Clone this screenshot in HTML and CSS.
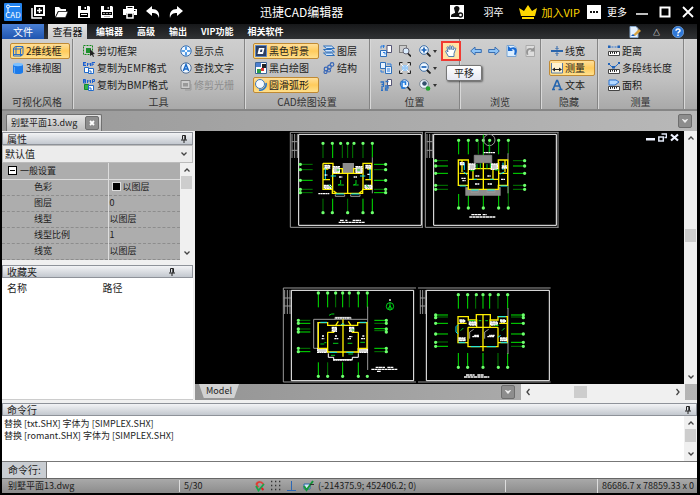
FILE: index.html
```html
<!DOCTYPE html>
<html lang="zh-CN">
<head>
<meta charset="UTF-8">
<meta name="viewport" content="width=device-width, initial-scale=1.0">
<title>迅捷CAD编辑器</title>
<link rel="stylesheet" href="styles.css">
</head>
<body>

<!-- Icon set -->
<svg class="icon-defs" aria-hidden="true">
  <symbol id="i-new" viewBox="0 0 14 14"><path d="M4 1h9v9H4z" fill="none" stroke="#fff" stroke-width="2"/><path d="M1 3v10h10M8.500 3v5M6 5.500h5" fill="none" stroke="#fff" stroke-width="1.500"/></symbol>
  <symbol id="i-open" viewBox="0 0 14 14"><path d="M1 12V2h4l2 2h5v2H4L1 12z" fill="#fff"/><path d="M4.500 6.500H14L11.500 12.500H1.500z" fill="#fff" stroke="#000" stroke-width=".5"/></symbol>
  <symbol id="i-save" viewBox="0 0 14 14"><path d="M1 1h11l1 1v11H1z" fill="#fff"/><path d="M4 1h6v4H4zM3 8h8v4H3z" fill="#000"/><path d="M7.500 2h1.500v2H7.500zM4 9h6v1H4z" fill="#fff"/></symbol>
  <symbol id="i-savepdf" viewBox="0 0 14 14"><path d="M1 1h11l1 1v11H1z" fill="#fff"/><path d="M4 1h6v4H4zM2 7h10v3H2z" fill="#000"/><path d="M7.500 2h1.500v2H7.500zM3 8h2v1H3zM6 8h2v1H6zM9 8h2v1H9zM4 11.500h6" fill="#fff" stroke="#333" stroke-width=".4"/></symbol>
  <symbol id="i-print" viewBox="0 0 14 14"><path d="M3 1h8v3H3zM0 4h14v6h-3V8H3v2H0z" fill="#fff"/><path d="M4 8h6v5H4z" fill="#000" stroke="#fff" stroke-width="1.500"/><path d="M4.500 2.500h5M11 5.500h1.500" stroke="#000"/></symbol>
  <symbol id="i-undo" viewBox="0 0 14 14"><path d="M0 6l6-5v3c5 0 8 3 7 9-1-4-3-5-7-5v3z" fill="#fff"/></symbol>
  <symbol id="i-redo" viewBox="0 0 14 14"><path d="M14 6L8 1v3C3 4 0 7 1 13c1-4 3-5 7-5v3z" fill="#fff"/></symbol>
  <symbol id="i-user" viewBox="0 0 14 14"><path d="M0 0h14v14H0z" fill="#fff"/><path d="M4 3.500C4 0 10 0 9.500 4L8 7.500l2 1.500v3H1c0-3 1-3 4-4V7z" fill="#111"/><circle cx="10.500" cy="10" r="2" fill="#fff" stroke="#111" stroke-width="1.300"/></symbol>
  <symbol id="i-crown" viewBox="0 0 18 14"><path d="M0 3l5 3 4-6 4 6 5-3-2 8H2zM3 12h12v2H3z" fill="#ffd800"/></symbol>
  <symbol id="i-dots" viewBox="0 0 14 14"><path d="M0 0h14v14H0z" fill="#fff"/><path d="M3 6h2v2H3zM6 6h2v2H6zM9 6h2v2H9z" fill="#111"/></symbol>
  <symbol id="i-min" viewBox="0 0 12 12"><path d="M0 8h12" stroke="#fff" stroke-width="1.500"/></symbol>
  <symbol id="i-max" viewBox="0 0 12 12"><path d="M1.500 1.500h9v9h-9z" fill="none" stroke="#fff" stroke-width="2"/></symbol>
  <symbol id="i-close" viewBox="0 0 12 12"><path d="M1 1l10 10M11 1L1 11" stroke="#fff" stroke-width="1.800"/></symbol>

  <symbol id="i-wire" viewBox="0 0 12 12"><path d="M1.500 3l2-1.500h7.500v8l-2 1.500H1.500zM1.500 3v8M4 1.500v8M8.500 3.500V11M1.500 4h7l2.500-2M2 9.500h8" fill="none" stroke="#2a6dc4"/></symbol>
  <symbol id="i-solid" viewBox="0 0 12 12"><path d="M1 2.500v8c2 2 8 2 10 0v-8z" fill="#1c7bea"/><ellipse cx="6" cy="2.500" rx="5" ry="1.700" fill="#7cc0ff"/><path d="M2.500 5v6" stroke="#5aa9ff"/></symbol>
  <symbol id="i-cutframe" viewBox="0 0 12 12"><path d="M.5.500h9v9h-9z" fill="none" stroke="#158a1b" stroke-dasharray="2 1"/><path d="M3 3h5v5H3z" fill="#1c8f2c"/><path d="M7 4l5 5-2 .3 1 2.200-1 .5-1-2.200L7 11z" fill="#222"/></symbol>
  <symbol id="i-emf" viewBox="0 0 12 12"><path d="M0 .5h3M0 2h2.500M0 3.500h3M.5 0v4M4.500 4V1l1.500 1.500L7.500 1v3M9 4V.5h3M9 2.200h2" stroke="#1b5fd0" fill="none"/><path d="M1.500 5.500h4v5h-4zM5.500 6.500h5v5h-5z" fill="#fff" stroke="#226ccc"/><path d="M7 8v2h2" stroke="#226ccc" fill="none"/></symbol>
  <symbol id="i-bmp" viewBox="0 0 12 12"><path d="M.5 0v4h2v-2H.5h2V.5H.5M4.500 4V1l1.500 1.500L7.500 1v3M9.500 4V.5h2v2h-2" stroke="#1b5fd0" fill="none"/><path d="M1.500 5.500h4v5h-4z" fill="#35b34a" stroke="#158a2b"/><path d="M5.500 6.500h5v5h-5z" fill="#fff" stroke="#226ccc"/><path d="M7 8v2h2" stroke="#226ccc" fill="none"/></symbol>
  <symbol id="i-showpt" viewBox="0 0 12 12"><circle cx="6" cy="6" r="5.200" fill="#eef6ff" stroke="#3a6fae"/><path d="M6 1.500v9M1.500 6h9" stroke="#2a86e2" stroke-width="1.600"/><circle cx="6" cy="6" r="1.200" fill="#fff"/></symbol>
  <symbol id="i-find" viewBox="0 0 12 12"><circle cx="6" cy="6" r="5.200" fill="#eef6ff" stroke="#4f6e96"/><path d="M3.300 9L6 2.500 8.700 9M4.300 7h3.400" stroke="#1768c8" stroke-width="1.500" fill="none"/></symbol>
  <symbol id="i-raster" viewBox="0 0 12 12"><path d="M1 1.500h9v8H1z" fill="#ccc" stroke="#888"/><path d="M3 4h5v3.500H3z" fill="#999"/><path d="M5 11h6V5" stroke="#999" fill="none"/></symbol>
  <symbol id="i-blackbg" viewBox="0 0 12 12"><path d="M.5.500h11v11H.5z" fill="#2c3f63" stroke="#5f86c4"/><path d="M4 3h5.500L8 9H2.500z" fill="#fff"/><path d="M5.500 4.500h2L7 7H5z" fill="#2c3f63"/></symbol>
  <symbol id="i-bw" viewBox="0 0 12 12"><path d="M.5.500h11v11H.5z" fill="#fff" stroke="#3c6597"/><path d="M1 1h5v4H1z" fill="#4d7fd0"/><path d="M7 2h4v4H7z" fill="#222"/><path d="M2 7h4v4H2z" fill="#29a04a"/><path d="M6 6h3v3H6z" fill="#d33"/></symbol>
  <symbol id="i-arc" viewBox="0 0 12 12"><circle cx="5" cy="5" r="4.500" fill="#f4f9ff" stroke="#3f79bd"/><path d="M11 4c1 4-3 8-7 7" fill="none" stroke="#2877d0" stroke-width="1.600"/></symbol>
  <symbol id="i-layers" viewBox="0 0 12 12"><path d="M.5 1h8l3 2.500h-8zM.5 4.500h8l3 2.500h-8zM.5 8h8l3 2.500h-8z" fill="#cfe6ff" stroke="#2e6fba"/></symbol>
  <symbol id="i-struct" viewBox="0 0 12 12"><g fill="none" stroke="#3a68b8" stroke-width="1.200"><circle cx="9" cy="2.500" r="1.800"/><circle cx="6.500" cy="5" r="1.800"/><circle cx="3" cy="7" r="1.800"/><circle cx="2.500" cy="10" r="1.500"/><circle cx="6" cy="8.500" r="1.500"/></g></symbol>
  <symbol id="i-pages" viewBox="0 0 12 12"><path d="M7 .5h4.500v7H7z" fill="#fff" stroke="#557"/><path d="M.5 5.500h6v6h-6z" fill="#e6f2ff" stroke="#2e6fba"/><path d="M1 3.500V1h4M3.500 0v3M3 7.500h2v2" fill="none" stroke="#2b7de0"/></symbol>
  <symbol id="i-pages2" viewBox="0 0 12 12"><path d="M.5.500h5v6h-5zM5.500 4.500h6v7h-6z" fill="#e6f2ff" stroke="#2e6fba"/><path d="M7 2h4v2M4 10H1V8M7 7h3M7 9h3" fill="none" stroke="#2b7de0"/></symbol>
  <symbol id="i-p35" viewBox="0 0 12 12"><path d="M7.500.500h4v6h-4z" fill="#fff" stroke="#557"/><path d="M.5 3h3v2.500H1.500h2V8M5.500 2.500h3M2 7v4M5 7h3v2H5.500v2H8M1 11.500h2" fill="none" stroke="#2a6fc4" stroke-width="1.300"/></symbol>
  <symbol id="i-zoomwin" viewBox="0 0 12 12"><path d="M.5.500h7v7h-7z" fill="none" stroke="#333" stroke-dasharray="1 1"/><circle cx="7" cy="6" r="3" fill="#dbeeff" stroke="#667"/><path d="M9 8.500l3 3" stroke="#222" stroke-width="1.600"/></symbol>
  <symbol id="i-fit" viewBox="0 0 12 12"><path d="M.5 3.500v-3h3M8.500.500h3v3M11.500 8.500v3h-3M3.500 11.500h-3v-3" fill="none" stroke="#222"/><path d="M3 3h6v6H3z" fill="#9ccbf7"/><path d="M2 2l2.500 2.500M10 2L7.500 4.500M2 10l2.500-2.500M10 10L7.500 7.500" stroke="#fff"/></symbol>
  <symbol id="i-zoomprev" viewBox="0 0 12 12"><circle cx="5.500" cy="5" r="4.200" fill="#eef7ff" stroke="#2a62a8"/><path d="M8.500 8l3 3.500" stroke="#222" stroke-width="1.600"/><path d="M3 2v7h3M3 3h3.500v3" stroke="#1d78dc" stroke-width="1.500" fill="none"/></symbol>
  <symbol id="i-zoomin" viewBox="0 0 12 12"><circle cx="5" cy="5" r="4.300" fill="#eef7ff" stroke="#3d6da5"/><path d="M8 8l3.500 3.500" stroke="#222" stroke-width="1.800"/><path d="M5 2.500v5M2.500 5h5" stroke="#1b62b8" stroke-width="1.700"/></symbol>
  <symbol id="i-zoomout" viewBox="0 0 12 12"><circle cx="5" cy="5" r="4.300" fill="#eef7ff" stroke="#3d6da5"/><path d="M8 8l3.500 3.500" stroke="#222" stroke-width="1.800"/><path d="M2.500 5h5" stroke="#1b62b8" stroke-width="1.700"/></symbol>
  <symbol id="i-zoomobj" viewBox="0 0 12 12"><circle cx="5" cy="5" r="4.300" fill="#eef7ff" stroke="#7b8794"/><circle cx="5.500" cy="4.500" r="2.300" fill="#33506e"/><path d="M8 8l3 3" stroke="#222"/><circle cx="9" cy="9.500" r="2.300" fill="#23a531"/></symbol>
  <symbol id="i-hand" viewBox="0 0 12 12"><path d="M3.500 11.500L.8 6.800c-.5-1 .7-1.500 1.400-.6L3 7 2 2.800c-.2-1.200 1.100-1.400 1.500-.3l.7 2.200L4.300 1.500c0-1.200 1.500-1.200 1.600 0L6 4.600l.8-3c.3-1.100 1.600-.8 1.500.3L7.900 5l1.400-1.800c.7-.9 1.800-.2 1.300.8L9 8.500v3z" fill="#fff" stroke="#3f6fa9" stroke-width=".9"/></symbol>
  <symbol id="i-left" viewBox="0 0 12 12"><path d="M.7 6L5 2v2.500h6.300v3H5V10z" fill="#8ec4f7" stroke="#3a6eb0"/></symbol>
  <symbol id="i-right" viewBox="0 0 12 12"><path d="M11.300 6L7 2v2.500H.7v3H7V10z" fill="#8ec4f7" stroke="#3a6eb0"/></symbol>
  <symbol id="i-back" viewBox="0 0 12 12"><path d="M1 .5h7l2 2v9H1z" fill="#dceeff" stroke="#7ba4cf"/><path d="M2 1v5h5L5.500 4.500C8 3.500 9.500 5 8 9.500l1.500.5C13 4 9 .5 4.500 3z" fill="#1769d2"/></symbol>
  <symbol id="i-fwd" viewBox="0 0 12 12"><path d="M2 .5h8.500v11H2z" fill="#ddd" stroke="#aaa"/><path d="M10.500 2v4.500H6L7.500 5C5 4 3 6 4.500 9.500l-1.500.5C.5 5 4 1.500 8.500 3.500z" fill="#949494"/></symbol>
  <symbol id="i-lw" viewBox="0 0 12 12"><path d="M0 6h12" stroke="#2a65ac" stroke-width="2"/><path d="M6 1v3M6 8v3M4.500 3L6 4.500 7.500 3M4.500 9L6 7.500 7.500 9" stroke="#2a65ac" fill="none"/></symbol>
  <symbol id="i-dim" viewBox="0 0 12 12"><path d="M.5 1v10h11V1" fill="#fff3d0" stroke="#557aa8"/><path d="M2 7.500h8" stroke="#222"/><path d="M1 7.500L4 5.500v4zM11 7.500L8 5.500v4z" fill="#222"/></symbol>
  <symbol id="i-text" viewBox="0 0 12 12"><path d="M2 10.500L5.700 1.500h.8l3.500 9M3.800 7h4.500M1 10.500h3M7.500 10.500h4" fill="none" stroke="#2464ad" stroke-width="1.600"/></symbol>
  <symbol id="i-dist" viewBox="0 0 12 12"><path d="M.5 2h11" stroke="#2b72d0" stroke-dasharray="2 1"/><path d="M0 .5h2.500v2.500H0zM9.500.500H12v2.500H9.500z" fill="#2162b6"/><path d="M.5 6.500h11v4H.5z" fill="#fff" stroke="#444"/><path d="M2.500 7v2M4.500 7v1.500M6.500 7v2M8.500 7v1.500" stroke="#222"/></symbol>
  <symbol id="i-poly" viewBox="0 0 12 12"><path d="M1 2l4 4 3-2 3-3" fill="none" stroke="#2b72d0"/><path d="M0 1h2v2H0zM4 4h3v2.500H4zM10 0h2v2h-2z" fill="#2162b6"/><path d="M.5 7.500h11v4H.5z" fill="#fff" stroke="#444"/><path d="M2.500 8v2M4.500 8v1.500M6.500 8v2M8.500 8v1.500" stroke="#222"/></symbol>
  <symbol id="i-area" viewBox="0 0 12 12"><path d="M1 1h7l3 2-4 3H1z" fill="#b4d9ff" stroke="#2b72d0"/><path d="M.5 7.500h11v4H.5z" fill="#fff" stroke="#444"/><path d="M2.500 8v2M4.500 8v1.500M6.500 8v2M8.500 8v1.500" stroke="#222"/></symbol>
  <symbol id="i-style" viewBox="0 0 12 12"><path d="M1 .5h6l2 2v9H1z" fill="#e4f1ff" stroke="#88a9cc"/><path d="M4 9l6-6 2 2-6 5z" fill="#d9a441"/><path d="M2 10l2-2 2 2z" fill="#1b61c4"/></symbol>
  <symbol id="i-help" viewBox="0 0 12 12"><circle cx="6" cy="6" r="5.700" fill="#2f78d8" stroke="#8bbcf3" stroke-width=".6"/><path d="M4 4.700C4 2.300 8 2.300 8 4.700 8 6 6 6 6 7.500M6 8.500v1.500" fill="none" stroke="#fff" stroke-width="1.500"/></symbol>
  <symbol id="i-pin" viewBox="0 0 8 8"><path d="M2.500 4.500V.5h3v4M1 5h6M4 5v3M4.800 1v4" fill="none" stroke="#222"/></symbol>
  <symbol id="i-up" viewBox="0 0 8 8"><path d="M1.500 5.500L4 3l2.500 2.500" fill="none" stroke="#444" stroke-width="1.300"/></symbol>
  <symbol id="i-down" viewBox="0 0 8 8"><path d="M1.500 2.500L4 5l2.500-2.500" fill="none" stroke="#444" stroke-width="1.300"/></symbol>
  <symbol id="i-prev" viewBox="0 0 8 8"><path d="M5.500 1L3 4l2.500 3" fill="none" stroke="#444" stroke-width="1.300"/></symbol>
  <symbol id="i-next" viewBox="0 0 8 8"><path d="M2.500 1L5 4 2.500 7" fill="none" stroke="#444" stroke-width="1.300"/></symbol>
  <symbol id="i-drop" viewBox="0 0 8 8"><path d="M1.500 2.500L4 5.500l2.500-3L4 3.500z" fill="#fff" stroke="#eee"/></symbol>
  <symbol id="i-x" viewBox="0 0 8 8"><path d="M2 2l4 4M6 2L2 6" stroke="#fff" stroke-width="1.800"/></symbol>
  <symbol id="i-snap" viewBox="0 0 12 12"><path d="M3 8L1.500 4.500C1 1 7-1 10 3.500L8.500 5C7 2 3.500 3 4 5l1.500 2z" fill="#e23b32" stroke="#9b9b9b" stroke-width=".5"/><path d="M2 6l2.500 4.500L10 4" fill="none" stroke="#1aa54a" stroke-width="1.800"/><path d="M7.500 8l2 2" stroke="#d22" stroke-width="2"/></symbol>
  <symbol id="i-grid" viewBox="0 0 12 12"><path d="M1 1.500h11M1 5.500h11M1 9.500h11" stroke="#333" stroke-dasharray="1.300 2.700" stroke-width="1.300"/></symbol>
  <symbol id="i-ortho" viewBox="0 0 12 12"><path d="M5.500 1v9M1 10.500h9" stroke="#2c67b4"/></symbol>
  <symbol id="i-osnap" viewBox="0 0 12 12"><path d="M2 4h6v5H2z" fill="#d5e8f8" stroke="#2a68a8"/><path d="M2 6l2.500 4L11 1" fill="none" stroke="#15963a" stroke-width="2"/><path d="M8 4.500h4" stroke="#333"/></symbol>
</svg>

<div class="app">

  <header class="titlebar">
    <svg class="logo" viewBox="0 0 18 18"><rect width="18" height="18" rx="1" fill="#2484ee"/><path d="M4 9V5M6 3.500h10" stroke="#fff"/><circle cx="4" cy="3.500" r="1.500" fill="none" stroke="#fff"/><text x="9" y="15" text-anchor="middle">CAD</text></svg>
    <div class="quick">
      <button aria-label="新建"><svg><use href="#i-new"/></svg></button>
      <button aria-label="打开"><svg><use href="#i-open"/></svg></button>
      <button aria-label="保存"><svg><use href="#i-save"/></svg></button>
      <button aria-label="另存为PDF"><svg><use href="#i-savepdf"/></svg></button>
      <button aria-label="打印"><svg><use href="#i-print"/></svg></button>
      <button aria-label="撤销"><svg><use href="#i-undo"/></svg></button>
      <button aria-label="重做"><svg><use href="#i-redo"/></svg></button>
    </div>
    <h1>迅捷CAD编辑器</h1>
    <div class="account">
      <button class="user"><svg><use href="#i-user"/></svg>羽卒</button>
      <button class="vip"><svg><use href="#i-crown"/></svg>加入VIP</button>
      <button class="more"><svg><use href="#i-dots"/></svg>更多</button>
      <div class="window-buttons">
        <button aria-label="最小化"><svg><use href="#i-min"/></svg></button>
        <button aria-label="最大化"><svg><use href="#i-max"/></svg></button>
        <button aria-label="关闭"><svg><use href="#i-close"/></svg></button>
      </div>
    </div>
  </header>

  <nav class="menu">
    <button class="file">文件</button>
    <button class="active">查看器</button>
    <button>编辑器</button>
    <button>高级</button>
    <button>输出</button>
    <button>VIP功能</button>
    <button>相关软件</button>
    <div class="menu-tools">
      <button aria-label="样式"><svg><use href="#i-style"/></svg></button>
      <button class="collapse" aria-label="折叠">△</button>
      <button aria-label="帮助"><svg><use href="#i-help"/></svg></button>
    </div>
  </nav>

  <div class="ribbon">
    <section class="group g-style">
      <div class="tools">
        <button class="tool on"><svg><use href="#i-wire"/></svg>2维线框</button>
        <button class="tool"><svg><use href="#i-solid"/></svg>3维视图</button>
      </div>
      <h2>可视化风格</h2>
    </section>
    <section class="group g-tools">
      <div class="tools">
        <button class="tool"><svg><use href="#i-cutframe"/></svg>剪切框架</button>
        <button class="tool"><svg><use href="#i-emf"/></svg>复制为EMF格式</button>
        <button class="tool"><svg><use href="#i-bmp"/></svg>复制为BMP格式</button>
        <button class="tool"><svg><use href="#i-showpt"/></svg>显示点</button>
        <button class="tool"><svg><use href="#i-find"/></svg>查找文字</button>
        <button class="tool" disabled><svg><use href="#i-raster"/></svg>修剪光栅</button>
      </div>
      <h2>工具</h2>
    </section>
    <section class="group g-cad">
      <div class="tools">
        <button class="tool on"><svg><use href="#i-blackbg"/></svg>黑色背景</button>
        <button class="tool"><svg><use href="#i-bw"/></svg>黑白绘图</button>
        <button class="tool on"><svg><use href="#i-arc"/></svg>圆滑弧形</button>
        <button class="tool"><svg><use href="#i-layers"/></svg>图层</button>
        <button class="tool"><svg><use href="#i-struct"/></svg>结构</button>
      </div>
      <h2>CAD绘图设置</h2>
    </section>
    <section class="group g-pos">
      <div class="tools">
        <button class="tool" aria-label="复制视图"><svg><use href="#i-pages"/></svg></button>
        <button class="tool" aria-label="切换视图"><svg><use href="#i-pages2"/></svg></button>
        <button class="tool" aria-label="旋转35"><svg><use href="#i-p35"/></svg></button>
        <button class="tool" aria-label="窗口缩放"><svg><use href="#i-zoomwin"/></svg></button>
        <button class="tool" aria-label="适应窗口"><svg><use href="#i-fit"/></svg></button>
        <button class="tool" aria-label="上一视图"><svg><use href="#i-zoomprev"/></svg></button>
        <button class="tool drop" aria-label="放大"><svg><use href="#i-zoomin"/></svg></button>
        <button class="tool drop" aria-label="缩小"><svg><use href="#i-zoomout"/></svg></button>
        <button class="tool drop" aria-label="缩放对象"><svg><use href="#i-zoomobj"/></svg></button>
        <button class="tool pan" aria-label="平移" aria-describedby="pan-tip"><svg><use href="#i-hand"/></svg><span class="tooltip" id="pan-tip" role="tooltip">平移</span></button>
      </div>
      <h2>位置</h2>
    </section>
    <section class="group g-browse">
      <div class="tools">
        <button class="tool" aria-label="向左"><svg><use href="#i-left"/></svg></button>
        <button class="tool" aria-label="向右"><svg><use href="#i-right"/></svg></button>
        <button class="tool" aria-label="后退"><svg><use href="#i-back"/></svg></button>
        <button class="tool" aria-label="前进"><svg><use href="#i-fwd"/></svg></button>
      </div>
      <h2>浏览</h2>
    </section>
    <section class="group g-hide">
      <div class="tools">
        <button class="tool"><svg><use href="#i-lw"/></svg>线宽</button>
        <button class="tool on"><svg><use href="#i-dim"/></svg>测量</button>
        <button class="tool"><svg><use href="#i-text"/></svg>文本</button>
      </div>
      <h2>隐藏</h2>
    </section>
    <section class="group g-measure">
      <div class="tools">
        <button class="tool"><svg><use href="#i-dist"/></svg>距离</button>
        <button class="tool"><svg><use href="#i-poly"/></svg>多段线长度</button>
        <button class="tool"><svg><use href="#i-area"/></svg>面积</button>
      </div>
      <h2>测量</h2>
    </section>
  </div>

  <div class="doc-tabs">
    <div class="doc-tab">别墅平面13.dwg<button aria-label="关闭文档"><svg><use href="#i-x"/></svg></button></div>
    <button class="dropper" aria-label="文档列表"><svg><use href="#i-drop"/></svg></button>
  </div>

  <main class="workspace">
    <aside class="side">
      <section class="panel">
        <h2 class="panel-head">属性<svg><use href="#i-pin"/></svg></h2>
        <div class="preset">
          <select aria-label="属性预设"><option>默认值</option></select>
          <svg><use href="#i-down"/></svg>
        </div>
        <div class="prop-box">
          <table class="props">
            <thead>
              <tr><th><span class="minus"></span>一般设置</th><th></th></tr>
            </thead>
            <tbody>
              <tr><td>色彩</td><td><span class="swatch"></span>以图层</td></tr>
              <tr><td>图层</td><td>0</td></tr>
              <tr><td>线型</td><td>以图层</td></tr>
              <tr><td>线型比例</td><td>1</td></tr>
              <tr><td>线宽</td><td>以图层</td></tr>
            </tbody>
          </table>
          <div class="scroll-y"><svg><use href="#i-up"/></svg><i class="thumb"></i><svg class="end"><use href="#i-down"/></svg></div>
        </div>
      </section>
      <section class="panel favorites">
        <h2 class="panel-head">收藏夹<svg><use href="#i-pin"/></svg></h2>
        <table class="fav">
          <tr><th>名称</th><th>路径</th></tr>
        </table>
      </section>
    </aside>

    <section class="view">
      <div class="canvas-row">
        <div class="canvas">
          <svg class="drawing" viewBox="0 0 489 253" preserveAspectRatio="xMidYMid slice">
            <!-- top left sheet -->
            <g transform="translate(85 -3) scale(.3333)">
              <path class="outer" d="M31 13h398M31 298h398M31 13v285M427 13v285"/>
              <path class="frame" d="M56 19h368v273H56z"/>
              <path class="stamp" d="M36 18v72M44 18v72M52 18v72M35 41h20M35 67h20"/>
              <path class="axis dim" d="M129 50v40M187 50v40M203 50v40M218 50v40M249 50v40M129 212v38M203 212v38M65 109h33M65 125h33M65 184h33M65 194h33M282 125h31M282 184h31"/>
              <path class="axis" d="M158 50v40M277 50v38M158 212v38M249 212v38M277 212v38M65 157h33M282 109h31M282 157h31M282 194h31"/>
              <path class="bub" d="M129 46h0M157 46h0M182 46h0M203 46h0M222 46h0M249 46h0M277 46h0M129 254h0M157 254h0M203 254h0M249 254h0M277 254h0M61 109h0M61 125h0M61 157h0M61 184h0M61 194h0M317 109h0M317 125h0M317 157h0M317 184h0M317 194h0"/>
              <path class="gray-fill" d="M188 105h34v30h-34z"/>
              <path class="thin" d="M277 88v108"/>
              <path class="wall" d="M129 106h30v16h28v14h34v-14h28v-16h28M129 106v78h28v12h46v-60M203 196h45v-12h27v-78M158 124v62M249 124v62M130 155h20M256 155h20M158 136h88M160 188l10 8M247 188l-10 8M203 136v60M131 123h14M262 123h14"/>
              <path class="cyan" d="M136 118v36M270 118v36M152 144h16M240 144h16M168 198h24M214 198h24M134 176h18M254 176h18"/>
              <path class="furn" d="M160 116h18v18h-18zM228 116h18v18h-18zM135 112h14v8h-14zM258 112h14v8h-14zM133 172h20v9h-20zM255 172h20v9h-20zM177 147h10M221 147h10M134 141h8M262 139h8M115 197h33"/>
              <path class="green" d="M182 156v12l-8 3h18M228 156v12l-8 3h16M170 126h8M232 126h8M146 170l8 8M258 170l8 8"/>
              <path class="thin" d="M166 199v6h28v-6M212 199v6h28v-6"/>
              <path class="caption" d="M176 283h78M180 277h12M196 277h6M218 277h25"/>
            </g>
            <!-- top right sheet -->
            <g transform="translate(220 -3) scale(.3333)">
              <path class="outer" d="M31 13h400M31 298h400M31 13v285M429 13v285"/>
              <path class="frame" d="M56 19h368v273H56z"/>
              <path class="stamp" d="M36 18v72M44 18v72M52 18v72M35 41h20M35 67h20"/>
              <path class="axis dim" d="M190 41v38M222 41v38M280 41v38M62 98h37M62 172h37M62 184h37M294 98h36M294 172h36M294 184h36M280 175v61"/>
              <path class="axis" d="M131 41v38M160 41v38M205 20v62M251 41v38M131 198v38M160 198v38M205 198v38M251 198v38M62 114h37M62 136h37M294 114h36M294 136h36"/>
              <path class="bub" d="M131 37h0M160 37h0M186 37h0M205 37h0M224 37h0M251 37h0M280 37h0M131 240h0M160 240h0M205 240h0M251 240h0M280 240h0M62 98h0M62 114h0M62 136h0M62 172h0M62 184h0M329 98h0M329 114h0M329 136h0M329 172h0M329 184h0"/>
              <path class="thin" d="M279 76v120M178 82h52v22h-52z"/>
              <circle class="ring" cx="223" cy="36" r="17"/>
              <path class="gray-fill" d="M180 84h48v18h-48zM151 178h106v25H151z"/>
              <path fill="#000" d="M160 172h90v14h-90z"/>
              <path class="wall" d="M130 96h30v26h90V96h28v76h-28v12h-90v-12h-30zM160 102v80M251 102v80M205 104v80M160 154h90M134 136h24M252 136h24M174 124v28M234 124v28M141 96v36M270 96v36"/>
              <path class="cyan" d="M148 104v22M264 104v22M146 132l10 8M256 138l12-6M168 186h24M216 186h24M134 174h20M256 174h20M176 154h10M226 154h10"/>
              <path class="furn" d="M162 108h18v16h-18zM229 108h18v16h-18zM136 104h10v6h-10zM262 114h12v6h-12zM139 151h14M142 158h10M258 154h12M181 144h12M217 144h10M180 168h14M218 168h14M206 74h34"/>
              <path class="green" d="M186 108v14M196 106v16M216 108v14M226 106v14M166 128h12M240 126h12M224 50v22"/>
              <path class="thin" d="M168 186v7h22v-7M216 186v7h24v-7"/>
              <path class="caption" d="M163 267h78M169 260h30M203 260h12"/>
            </g>
            <!-- bottom left sheet -->
            <g transform="translate(80 149) scale(.3333)">
              <path class="outer" d="M25 24h398M25 306h398M25 24v282"/>
              <path class="frame" d="M49 31h367v271H49z"/>
              <path class="stamp" d="M29 30v72M37 30v72M45 30v72M26 54h22M26 78h22"/>
              <path class="axis dim" d="M182 43v39M223 43v39M70 121h36M70 147h36M70 205h36M298 130h37M298 152h37M298 215h37M158 247v40"/>
              <path class="axis" d="M130 43v39M158 43v39M203 43v39M250 43v39M277 43v39M130 247v40M203 247v40M250 247v40M70 130h36M70 156h36M70 215h36M298 121h37M298 146h37M298 205h37"/>
              <path class="bub" d="M130 39h0M158 39h0M182 39h0M203 39h0M223 39h0M250 39h0M277 39h0M130 289h0M158 289h0M203 289h0M250 289h0M277 289h0M70 121h0M70 130h0M70 147h0M70 156h0M70 205h0M70 215h0M334 121h0M334 130h0M334 147h0M334 156h0M334 205h0M334 215h0"/>
              <path class="thin" d="M278 80v190M116 118h162M116 118v87h12M128 126v78M180 120v-8h48v8"/>
              <path class="furn" d="M128 206h28v11h-28zM250 206h27v11h-27zM181 114h46M174 240h58M172 142h12v12h-12zM224 142h12v12h-12zM141 168h6M140 176h8M180 168h6M178 176h12M222 170h10M218 176h10M262 168h6M258 176h12"/>
              <path class="porch" d="M160 220v12h16v7h56v-7h18v-12"/>
              <path class="wall" d="M130 128h28v8h90v-8h28v77h-26v11h-92v-11h-28zM158 157v58M250 157v58M204 118v112M158 157h20M230 157h20M182 136l8-12M228 136l-8-12M158 205v-48"/>
              <path class="cyan" d="M136 127h20M254 127h20M198 136l5-6 6 6M164 217h22M214 217h22"/>
              <path class="green" d="M162 106l8-4h8M136 192h12M148 188h6M174 190h16M218 190h14M256 187h14M168 226h12M220 222h14M230 150h8"/>
              <circle class="compass" cx="345" cy="79" r="11"/>
              <path class="green" d="M345 67v24M339 87l6-10 6 10"/>
              <path class="furn" d="M345 57v7"/>
              <path class="caption" d="M289 268h78M302 262h28M337 262h18M306 274h12"/>
            </g>
            <!-- bottom right sheet -->
            <g transform="translate(215 149) scale(.3333)">
              <path class="outer" d="M24 24h398M24 306h398"/>
              <path class="frame" d="M49 31h369v271H49z"/>
              <path class="stamp" d="M31 30v72M38 30v72M46 30v72M30 54h17M30 78h17"/>
              <path class="axis dim" d="M197 48v38M264 48v38M77 111h37M77 186h37M303 111h37M303 199h37M264 219v40"/>
              <path class="axis" d="M145 48v38M173 48v38M219 48v38M239 48v38M293 48v38M145 219v40M173 219v40M219 219v40M293 219v40M77 105h37M77 130h37M77 162h37M77 199h37M303 105h37M303 130h37M303 162h37M303 187h37"/>
              <path class="bub" d="M145 44h0M173 44h0M199 44h0M219 44h0M240 44h0M265 44h0M293 44h0M145 262h0M173 262h0M219 262h0M265 262h0M293 262h0M77 105h0M77 113h0M77 130h0M77 162h0M77 187h0M77 199h0M340 105h0M340 113h0M340 130h0M340 162h0M340 187h0M340 199h0"/>
              <path class="thin" d="M294 84v138"/>
              <path class="wall" d="M144 110h31v10h24v-16h42v16h23v-10h28v78h-28v12h-90v-12h-30zM174 142v58M264 142v58M219 104v110M174 142h90M146 130h24M268 130h24M200 118v22M240 118v22"/>
              <path class="cyan" d="M144 134l-6 6v16l6 6M182 200h28M230 200h28M264 110h24M264 172l8-6M146 188h20M272 188h20"/>
              <path class="furn" d="M178 126h20v9h-20zM242 126h20v9h-20zM150 120h14v6h-14zM272 120h14v6h-14zM147 174h18v8h-18zM272 174h18v8h-18zM187 170h18v-4h-12M232 170h20v-4h-14"/>
              <path class="thin" d="M179 176v-20l12-8M224 176v-20l12-8"/>
              <path class="green" d="M178 122h16M254 136h12M152 152l8-8M276 152l8-8M206 122h8M226 122h8"/>
              <path class="caption" d="M162 291h76M168 285h26M202 285h20"/>
            </g>
          </svg>
          <div class="mdi">
            <svg viewBox="0 0 9 9"><path d="M0 5h9v2.500H0z" fill="#eef2ff"/></svg>
            <svg viewBox="0 0 9 9"><path d="M3.500 1h5v3.500h-2M.8 4h4.500v4H.8z" fill="none" stroke="#dfe6f5" stroke-width="1.500"/></svg>
            <svg viewBox="0 0 9 9"><path d="M1 1.500l7 6M8 1.500l-7 6" stroke="#eef2ff" stroke-width="2.200"/></svg>
          </div>
        </div>
        <div class="scroll-y tall"><svg><use href="#i-up"/></svg><i class="thumb"></i><svg class="end"><use href="#i-down"/></svg></div>
      </div>
      <div class="model-row">
        <button class="model">Model</button>
        <button class="dropper" aria-label="布局列表"><svg><use href="#i-drop"/></svg></button>
        <div class="scroll-x"><svg><use href="#i-prev"/></svg><i class="thumb"></i><svg class="end"><use href="#i-next"/></svg></div>
      </div>
    </section>
  </main>

  <section class="command">
    <h2 class="panel-head">命令行<svg><use href="#i-pin"/></svg></h2>
    <div class="log-row">
      <div class="log">
        <p>替换 [txt.SHX] 字体为 [SIMPLEX.SHX]</p>
        <p>替换 [romant.SHX] 字体为 [SIMPLEX.SHX]</p>
      </div>
      <div class="scroll-y"><svg><use href="#i-up"/></svg><i class="thumb"></i><svg class="end"><use href="#i-down"/></svg></div>
    </div>
    <div class="prompt">
      <label for="cmd">命令行:</label>
      <input type="text" id="cmd">
    </div>
  </section>

  <footer class="status">
    <span class="name">别墅平面13.dwg</span>
    <span class="count">5/30</span>
    <span class="snaps">
      <svg><use href="#i-snap"/></svg>
      <svg><use href="#i-grid"/></svg>
      <svg><use href="#i-ortho"/></svg>
      <svg><use href="#i-osnap"/></svg>
    </span>
    <span class="coords">(-214375.9; 452406.2; 0)</span>
    <span class="blank"></span>
    <span class="extent">86686.7 x 78859.33 x 0</span>
  </footer>
</div>

</body>
</html>
```
FILE: styles.css
```css
* {
  box-sizing: border-box;
}

body {
  margin: 0;
  background-color: #000;
  color: #1c1c1c;
  font-family: "Noto Sans CJK SC", "Noto Sans", sans-serif;
  font-size: 10px;
  line-height: 12px;
}

button,
input,
select {
  font: inherit;
  color: inherit;
  margin: 0;
  padding: 0;
  border: none;
  background: none;
}

h1, h2, p {
  margin: 0;
  font-weight: normal;
  font-size: inherit;
}

svg {
  display: block;
  flex: none;
}

.icon-defs {
  position: absolute;
  width: 0;
  height: 0;
}

.app {
  display: flex;
  flex-direction: column;
  height: 100vh;
  padding: 0 3px 2px 2px;
}

/* Title bar */
.titlebar {
  display: flex;
  align-items: center;
  height: 24px;
  padding: 0 3px 0 2px;
  color: #fff;
}

.logo {
  width: 18px;
  height: 18px;
}

.logo text {
  font-size: 8px;
  fill: #fff;
}

.quick {
  display: flex;
  gap: 9px;
  margin-left: 9px;
}

.quick svg {
  width: 14px;
  height: 14px;
}

.titlebar h1 {
  flex: 1;
  padding-left: 77px;
  font-size: 12px;
  line-height: 16px;
  white-space: nowrap;
}

.account,
.account button {
  display: flex;
  align-items: center;
}

.account > button {
  white-space: nowrap;
}

.account svg {
  width: 14px;
  height: 14px;
}

.user {
  gap: 19px;
  margin-right: 16px;
}

.vip {
  gap: 4px;
  margin-right: 7px;
  color: #ffd800;
  font-size: 11px;
}

.account .vip svg {
  width: 18px;
}

.more {
  gap: 6px;
}

.window-buttons {
  display: flex;
  gap: 11px;
  margin-left: 9px;
}

.window-buttons svg {
  width: 12px;
  height: 12px;
}

/* Menu tabs */
.menu {
  display: flex;
  height: 15px;
  background: linear-gradient(#17181a, #303234);
  color: #fff;
  font-size: 9px;
  font-weight: bold;
}

.menu > button {
  padding: 0 7px;
  white-space: nowrap;
}

.menu .file {
  width: 42px;
  margin-right: 4px;
  background: linear-gradient(#4a80d4, #1f55b0);
  font-size: 10px;
  font-weight: normal;
}

.menu .active {
  width: 39px;
  margin-right: 2px;
  padding: 0;
  background: linear-gradient(#e4e4e4, #cacaca);
  color: #111;
  font-size: 10px;
  font-weight: normal;
}

.menu-tools {
  display: flex;
  align-items: center;
  gap: 12px;
  margin-left: auto;
  padding-right: 13px;
}

.menu-tools svg {
  width: 12px;
  height: 12px;
}

.collapse {
  font-size: 7px;
}

/* Ribbon */
.ribbon {
  display: flex;
  height: 72px;
  border-bottom: 2px solid #858585;
  background: linear-gradient(#cfcfcf, #bfbfbf 60%, #a9a9a9);
}

.group {
  display: flex;
  flex-direction: column;
  justify-content: space-between;
  padding: 4px 0 1px 8px;
  border-right: 1px solid #858585;
  box-shadow: 1px 0 #d8d8d8;
}

.group h2 {
  margin-left: -8px;
  color: #333;
  text-align: center;
}

.tools {
  display: grid;
  grid-auto-flow: column;
  grid-template-rows: repeat(3, 17px);
  align-items: start;
  justify-content: start;
}

.tool {
  display: flex;
  align-items: center;
  gap: 2px;
  height: 16px;
  padding: 0 1px;
  border: 1px solid transparent;
  border-radius: 2px;
  white-space: nowrap;
}

.tool svg {
  width: 12px;
  height: 12px;
}

.tool:disabled {
  color: #8e8e8e;
}

.tool.on {
  border-color: #c08a34;
  background: linear-gradient(#ffdf9a, #ffcb5c 50%, #ffe08c);
}

.g-style {
  width: 71px;
}

.g-style .tools {
  grid-template-columns: 60px;
}

.g-tools {
  width: 172px;
}

.g-tools .tools {
  grid-template-columns: 97px auto;
}

.g-cad {
  width: 125px;
}

.g-cad .tools {
  grid-template-columns: 66px auto;
  column-gap: 2px;
}

.g-pos {
  width: 90px;
}

.g-pos .tools {
  grid-template-columns: 19px 20px 24px 20px;
}

.drop::after {
  content: "";
  border: 2px solid transparent;
  border-top: 3px solid #333;
  border-bottom: none;
}

.pan {
  position: relative;
  justify-content: center;
  width: 20px;
  height: 20px;
  margin: -2px 0 0;
  border: 2px solid #f03a32;
  border-radius: 0;
  background-color: #ffe2a6;
}

.tooltip {
  position: absolute;
  z-index: 2;
  top: 22px;
  left: 3px;
  width: 36px;
  padding: 1px 0;
  border: 1px solid #767676;
  border-radius: 2px;
  background: linear-gradient(#fff, #e6e8f2);
  box-shadow: 1px 1px 2px rgba(0, 0, 0, 0.5);
}

.g-browse {
  width: 81px;
}

.g-browse .tools {
  grid-auto-flow: row;
  grid-template-columns: repeat(4, 16px);
  column-gap: 2px;
}

.g-hide {
  width: 57px;
}

.g-hide .tools {
  grid-template-columns: 46px;
}

.g-measure {
  width: 86px;
}

/* Document tabs */
.doc-tabs {
  display: flex;
  align-items: flex-end;
  justify-content: space-between;
  height: 20px;
  padding: 0 5px 0 4px;
  background: linear-gradient(90deg, #999, #b8b8b8);
}

.doc-tab {
  display: flex;
  align-items: center;
  gap: 8px;
  height: 17px;
  padding: 0 2px 0 4px;
  border: 1px solid #707070;
  border-bottom: none;
  border-radius: 2px 2px 0 0;
  background: linear-gradient(#e4e4e4, #bdbdbd);
  font-size: 9px;
}

.doc-tab button,
.dropper {
  display: flex;
  align-items: center;
  justify-content: center;
  width: 14px;
  height: 14px;
  border: 1px solid #6e6e6e;
  border-radius: 2px;
  background-color: #8d8d8d;
}

.doc-tabs .dropper {
  align-self: center;
}

.doc-tab svg,
.dropper svg,
.panel-head svg,
.preset svg,
.scroll-y svg,
.scroll-x svg {
  width: 8px;
  height: 8px;
}

/* Workspace */
.workspace {
  display: flex;
  flex: 1;
  min-height: 0;
  background-color: #f0f0f0;
}

.side {
  display: flex;
  flex-direction: column;
  width: 193px;
  padding: 1px 2px 0 0;
}

.panel-head {
  display: flex;
  align-items: center;
  justify-content: space-between;
  height: 13px;
  padding: 0 4px;
  border: 1px solid #8e9299;
  background: linear-gradient(#f2f3f5, #c3c8cf);
}

.preset {
  display: flex;
  align-items: center;
  height: 18px;
  padding-right: 4px;
  border: 1px solid #bbb;
  background-color: #ececec;
}

.preset select {
  flex: 1;
  appearance: none;
  padding-left: 2px;
}

.prop-box {
  display: flex;
  height: 97px;
}

.props {
  flex: 1;
  border-collapse: collapse;
  table-layout: fixed;
  background-color: #adadad;
}

.props th,
.props td {
  height: 16px;
  padding: 0;
  border-bottom: 1px dashed #8d8d8d;
  font-size: 9px;
  font-weight: normal;
  line-height: 12px;
  text-align: left;
  white-space: nowrap;
}

.props th:first-child,
.props td:first-child {
  width: 106px;
  border-right: 1px solid #ddd;
}

.props th {
  border-bottom: 1px solid #ddd;
}

.props th:first-child {
  padding-left: 6px;
}

.props td:first-child {
  padding-left: 32px;
}

.props td:last-child {
  padding-left: 1px;
}

.minus {
  display: inline-block;
  width: 9px;
  height: 9px;
  margin-right: 3px;
  border: 1px solid #000;
  background: linear-gradient(#000, #000) center / 5px 1px no-repeat #fff;
  vertical-align: -1px;
}

.swatch {
  display: inline-block;
  width: 9px;
  height: 9px;
  margin: 0 2px;
  border: 1px solid #ddd;
  background-color: #000;
  vertical-align: -1px;
}

.scroll-y {
  display: flex;
  flex-direction: column;
  align-items: center;
  width: 13px;
  padding: 3px 0;
  background-color: #f0f0f0;
}

.scroll-y .thumb {
  width: 11px;
  height: 13px;
  margin-top: 2px;
  background-color: #cdcdcd;
}

.scroll-y .end,
.scroll-x .end {
  margin-top: auto;
}

.favorites {
  display: flex;
  flex: 1;
  flex-direction: column;
  margin-top: 5px;
  border-bottom: 1px solid #ccc;
  background-color: #fff;
}

.favorites .panel-head {
  padding-right: 16px;
}

.fav {
  width: 100%;
  border-collapse: collapse;
}

.fav th {
  width: 50%;
  padding: 4px 5px;
  font-weight: normal;
  text-align: left;
}

/* Drawing view */
.view {
  display: flex;
  flex: 1;
  flex-direction: column;
  min-width: 0;
}

.canvas-row {
  display: flex;
  flex: 1;
  min-height: 0;
}

.canvas {
  position: relative;
  flex: 1;
  overflow: hidden;
  background-color: #000;
}

.drawing {
  width: 100%;
  height: 100%;
}

.drawing path,
.drawing circle {
  stroke-width: 3;
}

.outer,
.thin,
.stamp,
.ring {
  fill: none;
  stroke: #999;
}

.frame,
.porch {
  fill: none;
  stroke: #fff;
}

.axis {
  stroke: #00e800;
}

.dim {
  stroke: #007c00;
}

.drawing .bub {
  stroke: #6dff6d;
  stroke-width: 10;
  stroke-linecap: round;
}

.drawing .wall {
  fill: none;
  stroke: #fff000;
  stroke-width: 4;
}

.cyan {
  fill: none;
  stroke: #00e5ff;
}

.green,
.compass {
  fill: none;
  stroke: #00d018;
}

.drawing .furn {
  fill: #ccc;
  stroke: #fff;
  stroke-width: 4;
  stroke-dasharray: 6 1;
}

.gray-fill {
  fill: #8c8c8c;
}

.drawing .caption {
  fill: none;
  stroke: #fff;
  stroke-width: 4;
  stroke-dasharray: 9 1;
}

.mdi {
  position: absolute;
  top: 2px;
  right: 5px;
  display: flex;
  gap: 3px;
}

.mdi svg {
  width: 9px;
  height: 9px;
}

.tall .thumb {
  margin-top: 87px;
}

.model-row {
  display: flex;
  align-items: center;
  height: 16px;
  padding-right: 12px;
  background: linear-gradient(90deg, #959595, #b5b5b5);
}

.model {
  align-self: flex-start;
  width: 40px;
  height: 14px;
  margin: 0 auto 0 4px;
  background-color: #d2d2d2;
  clip-path: polygon(0 0, 100% 0, 88% 100%, 12% 100%);
  font-size: 9px;
}

.scroll-x {
  display: flex;
  align-items: center;
  align-self: stretch;
  width: 164px;
  margin-left: 6px;
  padding: 0 3px;
  background-color: #f0f0f0;
}

.scroll-x .thumb {
  width: 13px;
  height: 12px;
  margin-left: 42px;
  background-color: #cdcdcd;
}

.scroll-x .end {
  margin: 0 0 0 auto;
}

/* Command line */
.command {
  border-top: 3px solid #f0f0f0;
  background-color: #fff;
}

.log-row {
  display: flex;
  justify-content: space-between;
  height: 45px;
}

.log {
  padding: 2px;
  font-size: 9px;
}

.prompt {
  display: flex;
  height: 17px;
  border-top: 1px solid #777;
}

.prompt label {
  flex: none;
  width: 45px;
  padding: 2px 0 2px 6px;
  border-right: 1px solid #777;
  background-color: #c9cdd2;
  white-space: nowrap;
}

.prompt input {
  flex: 1;
  min-width: 0;
  outline: none;
}

/* Status bar */
.status {
  display: flex;
  align-items: center;
  height: 15px;
  border-top: 1px solid #666;
  background: linear-gradient(#a9a9a9, #8c8c8c);
  font-size: 9px;
  white-space: nowrap;
}

.status span {
  padding-left: 4px;
}

.status .name {
  width: 178px;
  padding-left: 6px;
  border-right: 1px solid #ddd;
}

.status .count {
  width: 70px;
}

.status .snaps {
  display: flex;
  gap: 4px;
}

.snaps svg {
  width: 12px;
  height: 12px;
}

.status .coords {
  flex: 1;
  border-right: 1px solid #ddd;
}

.status .blank {
  align-self: stretch;
  width: 92px;
  border-right: 1px solid #ddd;
}

.status .extent {
  width: 99px;
}
```
